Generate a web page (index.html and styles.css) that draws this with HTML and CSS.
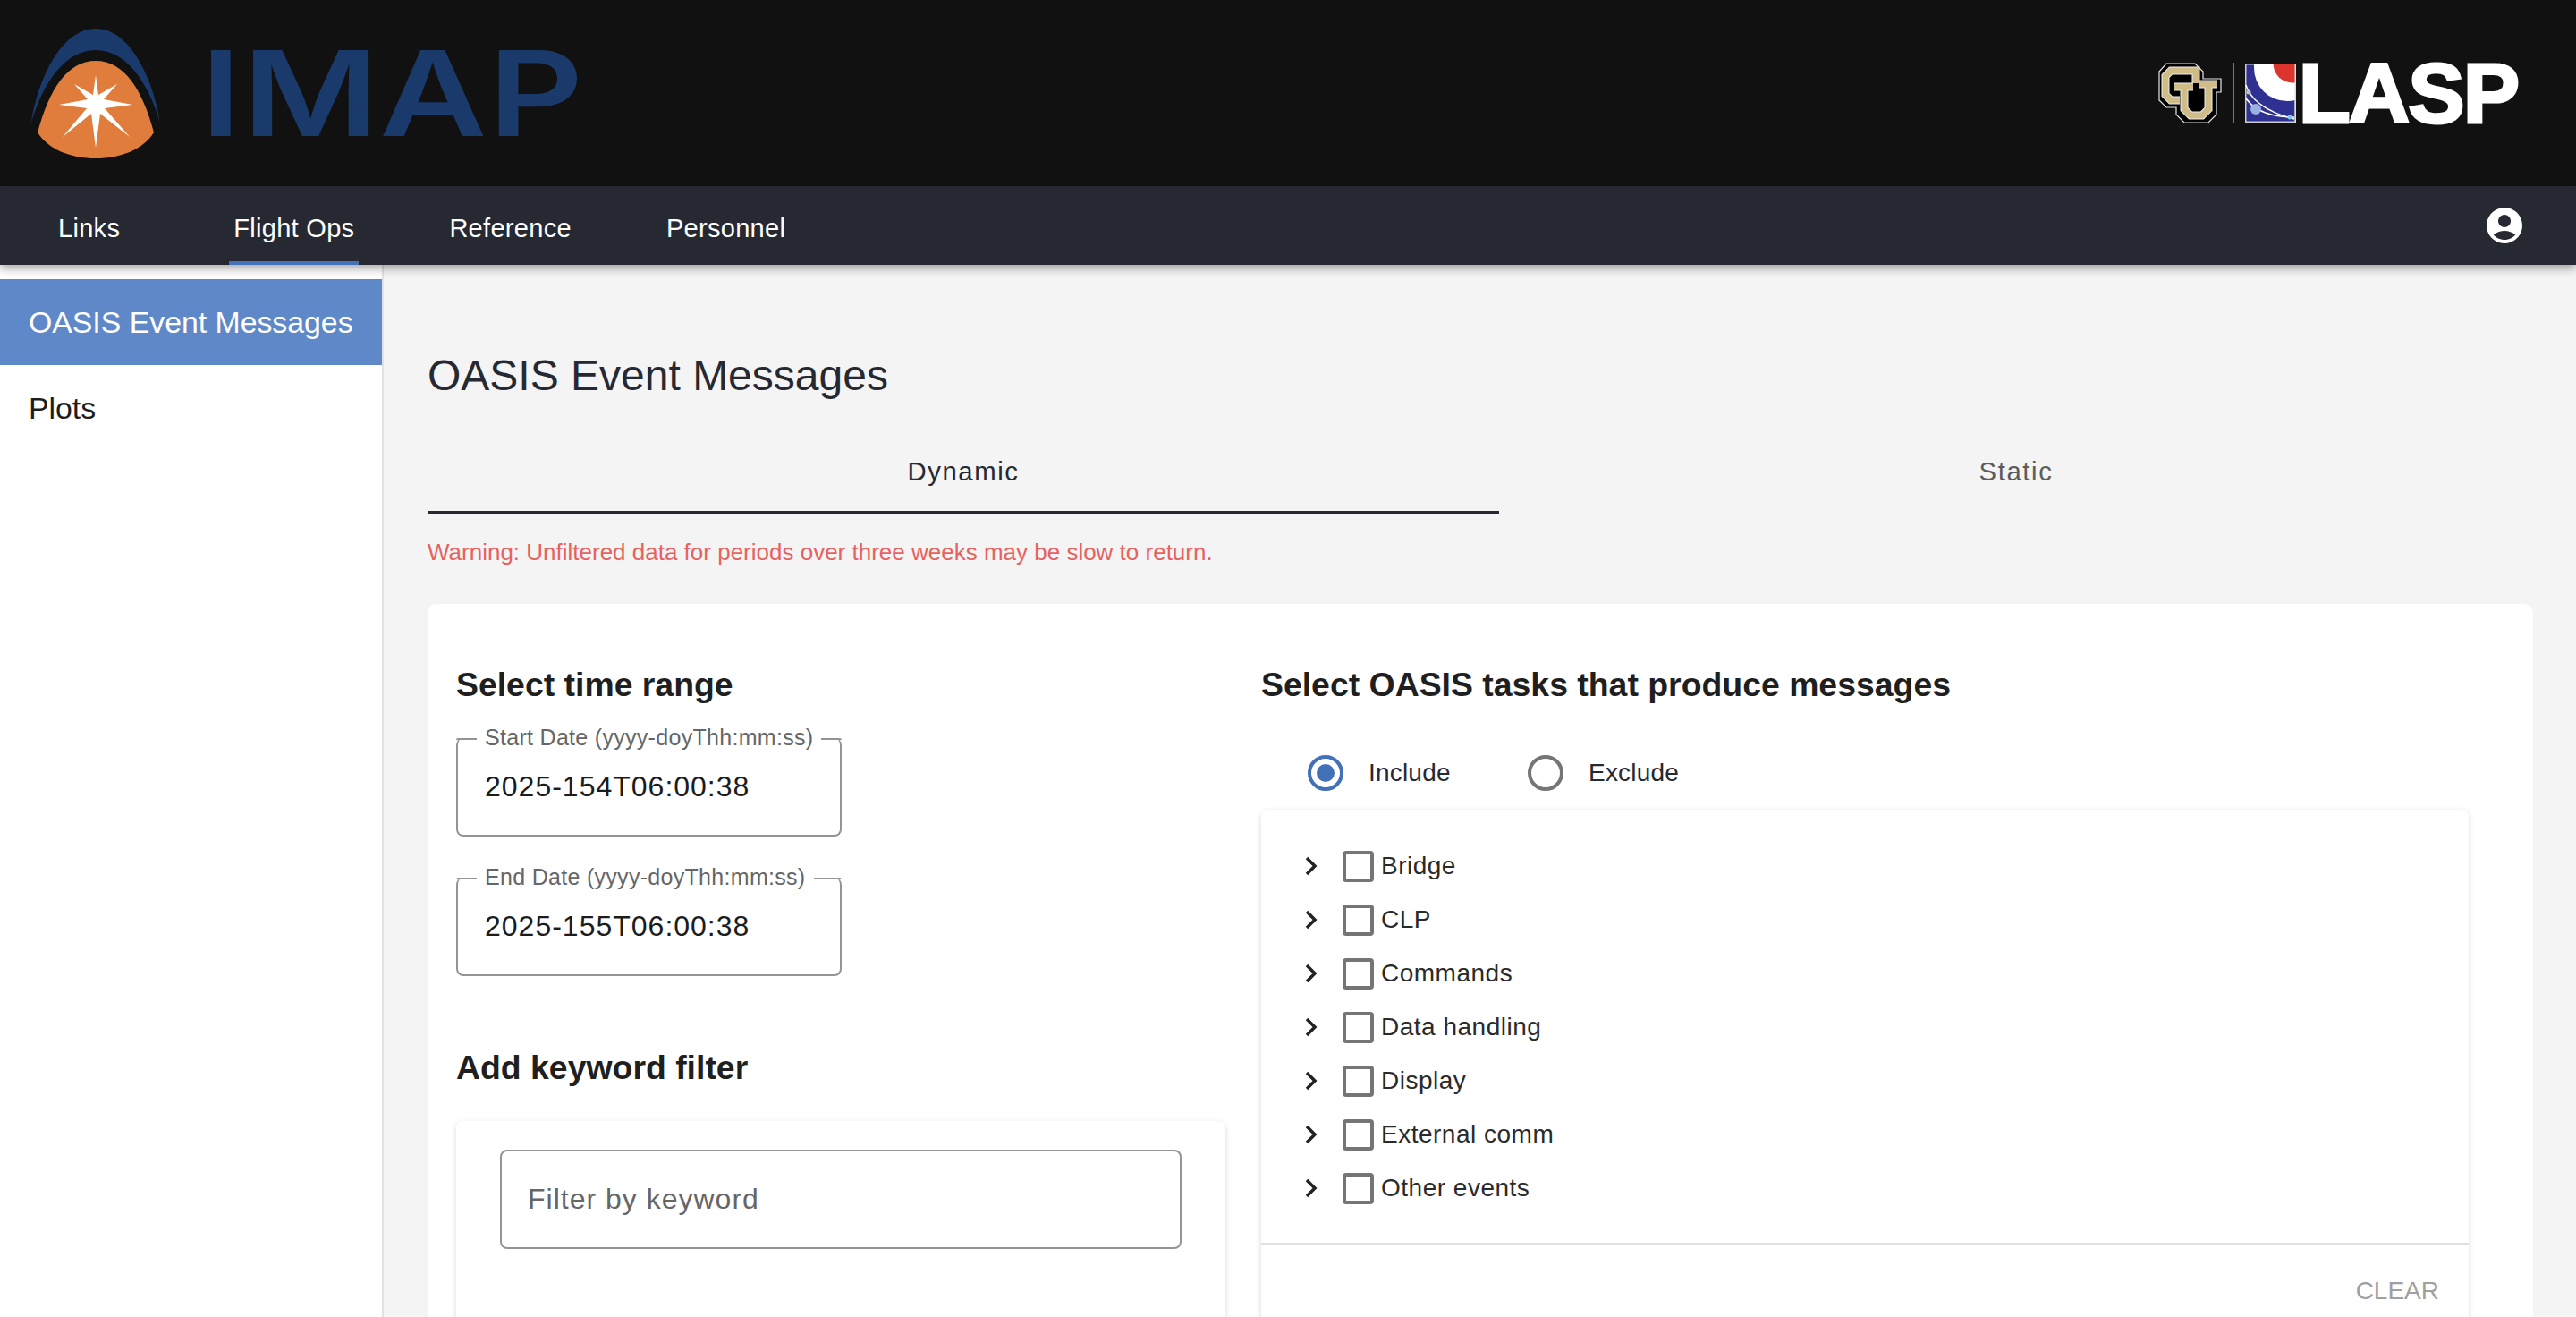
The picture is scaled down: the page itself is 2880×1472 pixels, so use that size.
FILE: index.html
```html
<!DOCTYPE html>
<html lang="en">
<head>
  <meta charset="UTF-8">
  <title>OASIS Event Messages</title>
  <link rel="stylesheet" href="styles.css">
</head>
<body>

<header class="top-bar">
  <div class="imap-logo">
    <svg class="imap-mark" viewBox="0 0 200 208" width="200" height="208">
      <path fill="#1a3a6b" d="M35 137 C42 90 68 32 107 32 C146 32 172 90 179 137 C165 90 140 56 107 56 C74 56 49 90 35 137 Z"/>
      <path fill="#e07d3c" d="M42 148 C55 100 75 68 107 68 C139 68 159 100 172 148 C160 167 135 177 107 177 C79 177 54 167 42 148 Z"/>
      <polygon fill="#fff" points="107,84 110,106 131,94 116,111 148,117 117,121 145,153 112,127 107,165 102,127 70,153 97,121 66,117 98,111 83,94 104,106"/>
      <circle fill="#fff" cx="107" cy="117" r="11"/>
    </svg>
    <span class="imap-name">IMAP</span>
  </div>

  <div class="lasp-logo">
    <svg class="cu-mark" viewBox="0 0 71 68" width="71" height="68">
      <polygon fill="#000" stroke="#e8e8e8" stroke-width="1.2" points="9,1 41,1 50,10 50,18 70,18 70,33 65,33 65,58 56,67 29,67 20,58 20,50 9,50 1,42 1,10"/>
      <path fill="none" stroke="#eee" stroke-width="9" d="M42 23 V9 H14 L8 15 V36 L14 42 H24"/>
      <path fill="none" stroke="#cfbc86" stroke-width="7" d="M42 23 V9 H14 L8 15 V36 L14 42 H24"/>
      <path fill="none" stroke="#eee" stroke-width="9" d="M18 27 H39 M29 27 V52 L36 59 H49 L56 52 V24 M45 24 H66"/>
      <path fill="none" stroke="#cfbc86" stroke-width="7" d="M18 27 H39 M29 27 V52 L36 59 H49 L56 52 V24 M45 24 H66"/>
    </svg>
    <div class="lasp-divider"></div>
    <svg class="lasp-mark" viewBox="0 0 57 66" width="57" height="66">
      <rect x="0.75" y="0.75" width="55.5" height="64.5" fill="#2e3192" stroke="#ccc" stroke-width="1.5"/>
      <circle cx="47" cy="5" r="37" fill="#fff"/>
      <rect x="10" y="0" width="47" height="5" fill="#fff"/>
      <circle cx="53" cy="0" r="21.5" fill="#dc352e"/>
      <rect x="55.5" y="0" width="1.5" height="66" fill="#ddd"/>
      <path fill="none" stroke="#fff" stroke-width="1.4" d="M1 24 Q9 50 55 62"/>
      <path fill="none" stroke="#fff" stroke-width="1.4" d="M1 39 Q16 60 55 60"/>
      <circle cx="4" cy="32" r="2.5" fill="#c5c5b5"/>
      <circle cx="12" cy="51" r="6" fill="#9ab0e0"/>
      <circle cx="50" cy="60" r="2.5" fill="#7fc8f0"/>
    </svg>
    <span class="lasp-name">LASP</span>
  </div>
</header>

<nav class="nav-bar">
  <div class="nav-links">
    <a class="nav-item nav-first">Links</a>
    <a class="nav-item active">Flight Ops</a>
    <a class="nav-item">Reference</a>
    <a class="nav-item">Personnel</a>
  </div>
  <svg class="user-icon" viewBox="0 0 24 24" width="48" height="48">
    <path fill="#fff" d="M12 2C6.48 2 2 6.48 2 12s4.48 10 10 10 10-4.48 10-10S17.52 2 12 2zm0 4c1.93 0 3.5 1.57 3.5 3.5S13.93 13 12 13s-3.5-1.57-3.5-3.5S10.07 6 12 6zm0 14c-2.03 0-4.43-.82-6.14-2.88C7.55 15.8 9.68 15 12 15s4.45.8 6.14 2.12C16.43 19.18 14.03 20 12 20z"/>
  </svg>
</nav>

<div class="page">
  <aside class="sidebar">
    <a class="side-item active">OASIS Event Messages</a>
    <a class="side-item">Plots</a>
  </aside>

  <main class="content">
    <h1>OASIS Event Messages</h1>

    <div class="tabs">
      <div class="tab active">Dynamic</div>
      <div class="tab">Static</div>
    </div>

    <p class="warning">Warning: Unfiltered data for periods over three weeks may be slow to return.</p>

    <section class="panel">
      <div class="col-left">
        <h2>Select time range</h2>

        <div class="date-field">
          <div class="field-top">
            <span class="field-edge"></span>
            <label>Start Date (yyyy-doyThh:mm:ss)</label>
            <span class="field-fill"></span>
          </div>
          <div class="field-value">2025-154T06:00:38</div>
        </div>

        <div class="date-field">
          <div class="field-top">
            <span class="field-edge"></span>
            <label>End Date (yyyy-doyThh:mm:ss)</label>
            <span class="field-fill"></span>
          </div>
          <div class="field-value">2025-155T06:00:38</div>
        </div>

        <h2 class="keyword-title">Add keyword filter</h2>

        <div class="keyword-card">
          <div class="keyword-input">Filter by keyword</div>
        </div>
      </div>

      <div class="col-right">
        <h2>Select OASIS tasks that produce messages</h2>

        <div class="radio-row">
          <div class="radio selected"><span class="radio-dot"></span></div>
          <span class="radio-label">Include</span>
          <div class="radio"></div>
          <span class="radio-label">Exclude</span>
        </div>

        <div class="tree-card">
          <ul class="tree">
            <li><svg class="chevron" viewBox="0 0 14 22"><path d="M2 2 L11 11 L2 20"/></svg><span class="check"></span>Bridge</li>
            <li><svg class="chevron" viewBox="0 0 14 22"><path d="M2 2 L11 11 L2 20"/></svg><span class="check"></span>CLP</li>
            <li><svg class="chevron" viewBox="0 0 14 22"><path d="M2 2 L11 11 L2 20"/></svg><span class="check"></span>Commands</li>
            <li><svg class="chevron" viewBox="0 0 14 22"><path d="M2 2 L11 11 L2 20"/></svg><span class="check"></span>Data handling</li>
            <li><svg class="chevron" viewBox="0 0 14 22"><path d="M2 2 L11 11 L2 20"/></svg><span class="check"></span>Display</li>
            <li><svg class="chevron" viewBox="0 0 14 22"><path d="M2 2 L11 11 L2 20"/></svg><span class="check"></span>External comm</li>
            <li><svg class="chevron" viewBox="0 0 14 22"><path d="M2 2 L11 11 L2 20"/></svg><span class="check"></span>Other events</li>
          </ul>
          <div class="tree-footer">CLEAR</div>
        </div>
      </div>
    </section>
  </main>
</div>

</body>
</html>
```

FILE: styles.css
```css
:root {
  --bar-black: #111;
  --bar-dark: #262932;
  --blue: #4271b7;
  --text: #262932;
  --border: #949494;
}

* {
  box-sizing: border-box;
}

body {
  margin: 0;
  height: 100vh;
  overflow: hidden;
  display: flex;
  flex-direction: column;
  font-family: "Liberation Sans", Arial, sans-serif;
  background: #f4f4f4;
  color: var(--text);
}

/* Top logo bar */
.top-bar {
  flex: none;
  height: 208px;
  background: var(--bar-black);
  display: flex;
  justify-content: space-between;
  align-items: flex-start;
}

.imap-logo {
  display: flex;
  align-items: flex-start;
}

.imap-name {
  margin: 32px 0 0 24px;
  font-family: Inter, sans-serif;
  font-size: 132px;
  line-height: 144px;
  font-weight: 600;
  letter-spacing: 1px;
  color: #1a3a6b;
  transform: scaleX(1.25);
  transform-origin: left center;
}

.lasp-logo {
  display: flex;
  align-items: flex-start;
  margin: 70px 65px 0 0;
}

.lasp-divider {
  width: 2px;
  height: 68px;
  margin: 0 12px 0 12px;
  background: #777;
}

.lasp-mark {
  margin-top: 1px;
}

.lasp-name {
  margin: -5px 0 0 3px;
  font-size: 95px;
  line-height: 78px;
  font-weight: 700;
  letter-spacing: -2px;
  color: #fff;
  -webkit-text-stroke: 3px #fff;
}

/* Nav */
.nav-bar {
  flex: none;
  position: relative;
  z-index: 2;
  height: 88px;
  background: var(--bar-dark);
  display: flex;
  justify-content: space-between;
  align-items: center;
  padding: 0 56px 0 60px;
  box-shadow: 0 4px 10px rgba(0, 0, 0, 0.35);
}

.nav-links {
  display: flex;
  align-self: stretch;
  gap: 96px;
}

.nav-item {
  display: flex;
  align-items: center;
  padding: 11px 5px 0;
  font-size: 29px;
  letter-spacing: 0.3px;
  color: #fff;
  border-bottom: 4px solid transparent;
}

.nav-item.active {
  border-bottom-color: var(--blue);
}

.nav-first {
  margin-right: 21px;
}

/* Page */
.page {
  flex: 1;
  display: flex;
  min-height: 0;
}

.sidebar {
  flex: none;
  width: 429px;
  padding-top: 16px;
  background: #fff;
  border-right: 2px solid #e2e2e2;
}

.side-item {
  display: flex;
  align-items: center;
  height: 96px;
  padding: 0 0 0 32px;
  font-size: 33.8px;
  color: #1c1c1c;
}

.side-item.active {
  background: #5f88c8;
  color: #fff;
}

.content {
  flex: 1;
  min-width: 0;
  padding: 0 48px 0 49px;
}

h1 {
  margin: 94px 0 0;
  font-size: 48px;
  line-height: 60px;
  font-weight: 400;
  color: var(--text);
}

.tabs {
  display: flex;
  margin-top: 55px;
}

.tab {
  height: 70px;
  padding-top: 6px;
  text-align: center;
  font-size: 29.3px;
  line-height: 32px;
  letter-spacing: 1.6px;
  color: #5c5c5c;
}

.tab:first-child {
  width: 1198px;
}

.tab:last-child {
  flex: 1;
}

.tab.active {
  color: var(--text);
  border-bottom: 4px solid var(--text);
}

.warning {
  margin: 26px 0 0;
  font-size: 26px;
  line-height: 32px;
  color: #e7625f;
}

.panel {
  margin-top: 42px;
  padding: 0 72px 0 32px;
  height: 900px;
  background: #fff;
  border-radius: 10px;
  display: flex;
}

.col-left {
  flex: none;
  width: 900px;
  padding-right: 40px;
}

.col-right {
  flex: 1;
}

h2 {
  margin: 69px 0 0;
  font-size: 37.4px;
  line-height: 42px;
  font-weight: 700;
  color: #1f1f1f;
}

/* Date fields, the border is broken by the label like an outlined input */
.date-field {
  width: 431px;
  height: 110px;
  margin-top: 39px;
  border: 2px solid var(--border);
  border-top: none;
  border-radius: 8px;
}

.date-field + .date-field {
  margin-top: 46px;
}

.field-top {
  display: flex;
  align-items: flex-start;
  height: 2px;
}

.field-edge,
.field-fill {
  height: 2px;
  background: var(--border);
}

.field-edge {
  flex: none;
  width: 23px;
  margin-left: -2px;
  border-top-left-radius: 8px;
}

.field-fill {
  flex: 1;
  margin-right: -2px;
  border-top-right-radius: 8px;
}

.field-top label {
  padding: 0 9px;
  font-size: 25px;
  line-height: 28px;
  margin-top: -15px;
  letter-spacing: 0.3px;
  color: #666;
  background: #fff;
}

.field-value {
  margin-top: 33px;
  padding-left: 30px;
  font-size: 32px;
  line-height: 38px;
  letter-spacing: 1px;
  color: #1c1c1c;
}

.keyword-title {
  margin-top: 81px;
}

.keyword-card {
  height: 400px;
  margin-top: 39px;
  padding: 32px 49px;
  background: #fff;
  border-radius: 8px;
  box-shadow: 0 2px 6px rgba(0, 0, 0, 0.15);
}

.keyword-input {
  height: 111px;
  padding: 0 29px;
  border: 2px solid var(--border);
  border-radius: 8px;
  display: flex;
  align-items: center;
  font-size: 32px;
  letter-spacing: 1px;
  color: #666;
}

/* Include / exclude */
.radio-row {
  display: flex;
  align-items: center;
  height: 40px;
  margin: 58px 0 0 52px;
}

.radio {
  width: 40px;
  height: 40px;
  border: 4px solid #757575;
  border-radius: 50%;
  display: flex;
  align-items: center;
  justify-content: center;
}

.radio.selected {
  border-color: var(--blue);
}

.radio-dot {
  width: 20px;
  height: 20px;
  border-radius: 50%;
  background: var(--blue);
}

.radio-label {
  margin-left: 28px;
  width: 178px;
  font-size: 28px;
  letter-spacing: 0.2px;
  color: var(--text);
}

/* Task tree */
.tree-card {
  height: 800px;
  margin-top: 21px;
  background: #fff;
  border-radius: 8px;
  box-shadow: 0 2px 6px rgba(0, 0, 0, 0.15);
}

.tree {
  list-style: none;
  margin: 0;
  padding: 33px 0 32px 49px;
  border-bottom: 2px solid #e0e0e0;
  height: 486px;
}

.tree li {
  display: flex;
  align-items: center;
  height: 60px;
  font-size: 28px;
  letter-spacing: 0.5px;
  color: #2a2a2a;
}

.chevron {
  flex: none;
  width: 14px;
  height: 22px;
  fill: none;
  stroke: #222;
  stroke-width: 3.5;
}

.check {
  flex: none;
  width: 35px;
  height: 35px;
  margin: 0 8px 0 28px;
  border: 4px solid #757575;
  border-radius: 4px;
}

.tree-footer {
  padding: 36px 33px 0 0;
  text-align: right;
  font-size: 28px;
  line-height: 32px;
  color: #a0a0a0;
}
```
